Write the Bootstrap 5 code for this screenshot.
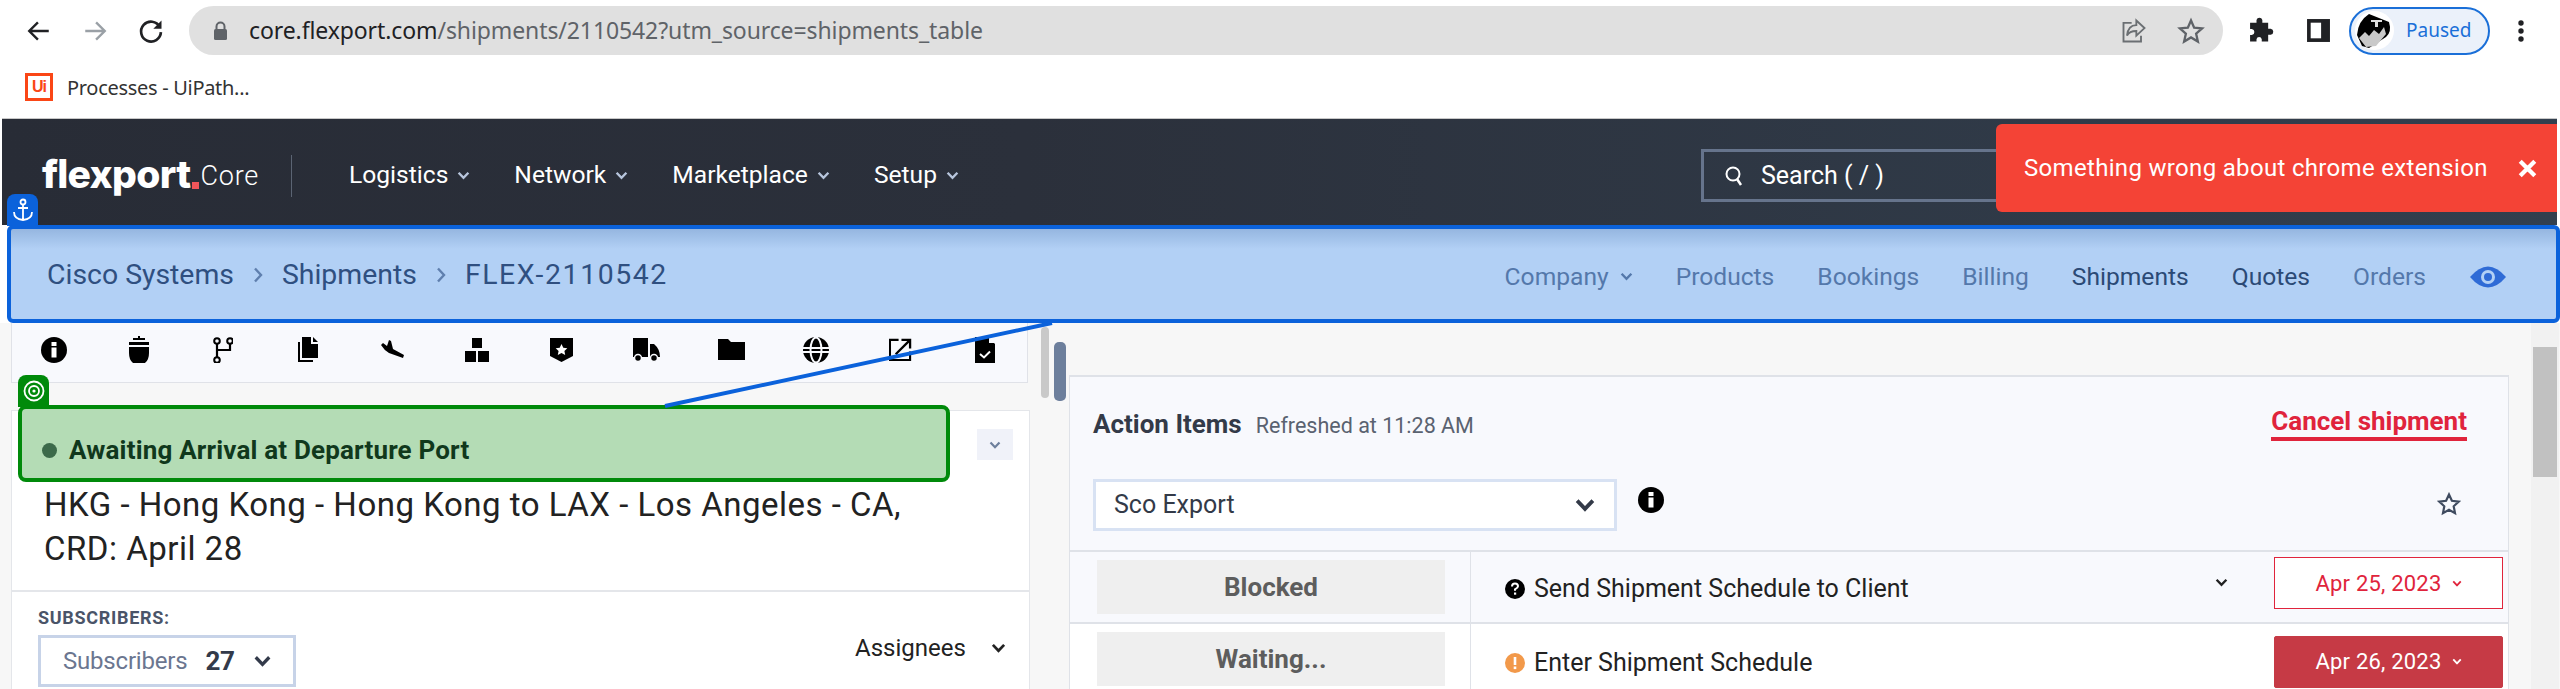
<!DOCTYPE html>
<html lang="en">
<head>
<meta charset="UTF-8">
<title>FLEX-2110542</title>
<link href="https://cdn.jsdelivr.net/npm/bootstrap@5.3.0/dist/css/bootstrap.min.css" rel="stylesheet">
<style>
html,body{height:689px;overflow:hidden;background:#fff;}
body{font-family:Roboto,"Liberation Sans",sans-serif;color:#222;position:relative;}
svg{display:block;flex:none;}

/* browser chrome */
.tool-row{height:60px;padding:6px 0 5px 0;}
.tool-btn{width:56px;display:flex;justify-content:center;}
.tool-back{margin-left:11px;}
.url-bar{width:2034px;height:49px;margin-left:10px;background:#e0e0e0;border-radius:25px;padding:0 18px 0 24px;font-family:"Noto Sans",sans-serif;font-size:23px;letter-spacing:-.1px;color:#5f6368;}
.url-bar b{font-weight:400;color:#202124;}
.url-lock{margin-right:21px;}
.url-icons{margin-left:auto;gap:29px;}
.tool-puzzle{margin-left:23px;}
.tool-side{margin-left:32px;}
.profile-pill{margin-left:18px;width:141px;height:48px;border:2px solid #1a6fd8;border-radius:24px;background:#ebf1fa;color:#1a6fd8;font-family:"Noto Sans",sans-serif;font-size:19px;padding-left:4px;gap:12px;}
.tool-dots{margin-left:27px;}
.mark-row{height:58px;padding:13px 0 0 25px;font-family:"Noto Sans",sans-serif;font-size:20px;letter-spacing:-.3px;color:#333;gap:14px;}
.ui-logo{width:28px;height:28px;border:3px solid #fa4616;color:#fa4616;font-size:16px;line-height:22px;text-align:center;font-family:"Liberation Sans",sans-serif;font-weight:700;letter-spacing:-1px;}

/* app header */
.top-nav{height:107px;margin:0 3px 0 2px;padding:0;border-top:1px solid #c8c8c8;background:linear-gradient(90deg,#282c36,#2b303b 40%,#323f4e);color:#fff;position:relative;display:flex;align-items:center;justify-content:flex-start;}
.brand-box{padding:0 0 0 40px;width:290px;height:42px;border-right:1px solid #5b6473;margin-top:7px;align-items:center;}
.brand-name{font-family:Inter,sans-serif;font-weight:800;font-size:39px;letter-spacing:-.7px;line-height:42px;color:#fff;margin-top:-3px;}
.brand-dot{display:inline-block;width:7px;height:7px;background:#f0555a;margin:0 1px 0 2px;}
.brand-core{font-size:27px;font-weight:300;margin-top:2px;letter-spacing:.8px;}
.top-links{margin-left:57px;margin-top:7px;gap:0;}
.top-links .nav-link{padding:0;color:#fff;font-size:24.6px;display:flex;align-items:center;gap:9px;margin-right:44px;}
.search-box{position:absolute;left:1699px;top:30px;width:400px;height:53px;border:3px solid #66748c;font-size:25px;padding-left:20px;gap:17px;color:#fff;}
.err-toast{position:absolute;left:1994px;top:5px;width:561px;height:88px;background:#f44336;border-radius:6px 0 0 6px;color:#fff;font-size:24px;letter-spacing:.32px;padding:0 20px 0 28px;justify-content:space-between;}
.anchor-tab{position:absolute;left:5px;top:75px;width:31px;height:32px;background:#0b62db;border-radius:8px 8px 0 0;display:flex;align-items:center;justify-content:center;}

/* highlighted sub header */
.sub-bar{height:98px;margin-left:7px;background:linear-gradient(180deg,#95b6e0,#b2d0f5 20px);border:4px solid #0b62db;border-radius:6px;padding:0 49px 0 36px;position:relative;z-index:2;}
.sub-bar .breadcrumb{margin:3px 0 0 0;font-size:28.4px;align-items:center;}
.crumb-item{color:#2f4f80;}
.crumb-flex{letter-spacing:1.6px;}
.crumb-sep{margin:0 18px;}
.sub-links{gap:43px;margin-top:6px;}
.sub-links .nav-link{padding:0;font-size:24.6px;color:#5478ab;display:flex;align-items:center;gap:11px;}
.sub-links .nav-link.on{color:#2b4a76;}

/* page body */
.main-area{height:366px;background:#f7f7f7;overflow:hidden;}
.left-col{width:1019px;margin-left:11px;flex:none;}
.icon-strip{height:60px;width:1017px;background:#f8f9fd;border:1px solid #e0e2e8;border-top:0;padding:0 0 6px 0;display:grid;grid-template-columns:repeat(12,84.6px);align-items:center;justify-items:center;}
.status-card{width:1019px;margin-top:27px;background:#fff;border:1px solid #e4e6ea;height:300px;position:relative;}
.status-row{height:72px;margin-top:-4px;}
.goal-tab{position:absolute;left:6px;top:-36px;width:31px;height:32px;background:#008a0a;border-radius:8px 8px 0 0;display:flex;align-items:center;justify-content:center;}
.status-box{margin-left:6px;width:932px;height:77px;background:#b4dcb5;border:4px solid #008a0a;border-radius:8px;padding:14px 0 0 20px;font-size:26px;letter-spacing:.18px;font-weight:700;color:#10381c;gap:12px;}
.status-dot{width:15px;height:15px;border-radius:50%;background:#3c6a4a;}
.status-btn{width:36px;height:31px;background:#f0f2f9;margin-left:27px;margin-top:3px;padding:0;border:0;border-radius:0;display:flex;align-items:center;justify-content:center;}
.ship-title{font-size:33px;letter-spacing:.5px;line-height:44px;font-weight:400;color:#222;margin:0;padding:4px 20px 0 32px;height:113px;border-bottom:2px solid #e4e6ea;}
.sub-label{font-size:18px;letter-spacing:.7px;font-weight:700;color:#4a5468;line-height:20px;margin:16px 0 7px 26px;}
.subs-btn{margin-left:26px;width:258px;height:52px;border:3px solid #c7d3e8;border-radius:0;background:#fff;color:#6b7690;font-size:24px;letter-spacing:-.2px;padding:0 0 0 22px;display:flex;align-items:center;gap:18px;}
.subs-btn b{color:#333a4a;font-size:26px;}
.assign-box{font-size:24px;color:#222;gap:25px;margin:-57px 0 0 843px;}
.gutter{width:39px;flex:none;padding:4px 0 0 11px;gap:5px;}
.bar-light{width:8px;height:71px;background:#c9c9c9;border-radius:4px;}
.bar-dark{width:12px;height:59px;margin-top:15px;background:#6d7f9c;border-radius:5px;}
.action-panel{width:1440px;margin-top:52px;height:320px;background:#f8f9fd;border:1px solid #dfe2e8;border-top-width:2px;flex:none;}
.action-head{height:95px;padding:28px 41px 0 23px;}
.action-title{font-size:26px;font-weight:700;color:#333a48;}
.action-time{font-size:21.5px;color:#5a6270;margin-left:14px;}
.cancel-link{font-size:26px;font-weight:700;color:#e0243c;border-bottom:4px solid #e0243c;line-height:31px;text-decoration:none;margin-top:1px;}
.filter-row{height:80px;padding:7px 47px 0 23px;border-bottom:2px solid #dfe2e8;align-items:flex-start!important;}
.filter-pick{width:524px;height:52px;border:3px solid #d8e2f3;background:#fff;font-size:25px;color:#333a48;padding:0 18px 0 18px;}
.filter-info{margin:8px 0 0 21px;}
.filter-star{margin:13px 0 0 auto;}
.item-row{height:72px;border-bottom:2px solid #dfe2e8;}
.item-row.white{background:#fff;height:76px;border:0;}
.state-cell{width:401px;height:100%;border-right:1px solid #dfe2e8;padding:8px 25px 0 27px;flex:none;}
.state-box{background:#efefef;height:54px;font-size:26px;font-weight:700;color:#5d5d5d;}
.item-name{font-size:25px;color:#222;padding-left:34px;gap:9px;margin-top:2px;}
.item-row:not(.white) .item-name{margin-top:4px;}
.item-chev{margin:-10px 46px 0 auto;}
.date-btn{width:229px;height:52px;margin-right:5px;padding:0;border-radius:0;font-size:22px;letter-spacing:.2px;display:flex;align-items:center;justify-content:center;gap:10px;border:1px solid #e0243c;color:#e0243c;background:#fff;margin-top:-8px;}
.date-btn.due{background:#c63a45;border-color:#c63a45;color:#fff;border-radius:2px;margin-top:-1px;}
.page-scroll{width:28px;margin-left:22px;background:#f1f1f1;flex:none;padding:24px 2px 0 2px;}
.page-thumb{height:130px;background:#c1c1c1;}
.link-line{position:absolute;left:0;top:0;z-index:3;pointer-events:none;}
</style>
</head>
<body>

<svg width="0" height="0" class="position-absolute">
  <symbol id="chev" viewBox="0 0 12 8"><path d="M1.500 1.500 6 6.200l4.500-4.700" fill="none" stroke="currentColor" stroke-width="2.200"/></symbol>
  <symbol id="sep" viewBox="0 0 10 16"><path d="M2 1.500 8 8l-6 6.500" fill="none" stroke="currentColor" stroke-width="2.400"/></symbol>
</svg>

<!-- browser toolbar -->
<div class="tool-row d-flex align-items-center">
  <div class="tool-btn tool-back"><svg width="26" height="26" viewBox="0 0 24 24"><path d="M21 12H4M11 4l-8 8 8 8" fill="none" stroke="#202124" stroke-width="2.200"/></svg></div>
  <div class="tool-btn"><svg width="26" height="26" viewBox="0 0 24 24"><path d="M3 12h17M13 4l8 8-8 8" fill="none" stroke="#9aa0a6" stroke-width="2.200"/></svg></div>
  <div class="tool-btn"><svg width="28" height="28" viewBox="0 0 24 24"><path d="M19.500 8.500A8.500 8.500 0 1 0 20.500 13" fill="none" stroke="#202124" stroke-width="2.300"/><path d="M21 3v7h-7z" fill="#202124"/></svg></div>
  <div class="url-bar d-flex align-items-center">
    <svg class="url-lock" width="15" height="20" viewBox="0 0 15 20"><path d="M3.500 8V5.500a4 4 0 0 1 8 0V8" fill="none" stroke="#5f6368" stroke-width="2"/><rect x="1" y="8" width="13" height="11" rx="1.500" fill="#5f6368"/></svg>
    <span><b>core.flexport.com</b>/shipments/2110542?utm_source=shipments_table</span>
    <div class="url-icons d-flex align-items-center">
      <svg width="28" height="28" viewBox="0 0 24 24"><path d="M10 5H3v16h15v-5" fill="none" stroke="#6b6f73" stroke-width="1.600"/><path d="M14 3l7 6.500-7 6.500v-4c-4 0-6.500 1-8 4 .5-5 3-9 8-9z" fill="none" stroke="#6b6f73" stroke-width="1.600"/></svg>
      <svg width="28" height="28" viewBox="0 0 24 24"><path d="M12 3l2.700 6.200 6.800.6-5.100 4.500 1.500 6.700L12 17.500 6.100 21l1.500-6.700L2.500 9.800l6.800-.6z" fill="none" stroke="#5f6368" stroke-width="2"/></svg>
    </div>
  </div>
  <svg class="tool-puzzle" width="28" height="28" viewBox="0 0 24 24"><path d="M9 2.500a2.600 2.600 0 0 1 5 0V5h5v5h2.200a2.700 2.700 0 0 1 0 5.300H19V21h-5.500v-2a2.300 2.300 0 0 0-4.500 0v2H3.500v-5.500H5a2.700 2.700 0 0 0 0-5.300H3.500V5H9z" fill="#202124"/></svg>
  <svg class="tool-side" width="25" height="25" viewBox="0 0 24 24"><path d="M1 1h22v22H1z" fill="#202124"/><path d="M4.500 4.500h10v15h-10z" fill="#fff"/></svg>
  <div class="profile-pill d-flex align-items-center">
    <svg width="39" height="39" viewBox="0 0 39 39"><circle cx="19.500" cy="19.500" r="19.500" fill="#fff"/><path d="M14 3 34 11q3 10-3 15L14 37 7 35 2 24Q3 10 14 3z" fill="#000"/><path d="M4 27l6-6 4 4 5-6 5 4 5-7 2 7-10 12-10 1z" fill="#c9c9c9"/><path d="M16 9h11v2h-4v5h-3v-5h-4z" fill="#ddd"/></svg>
    <span>Paused</span>
  </div>
  <svg class="tool-dots" width="8" height="24" viewBox="0 0 8 24"><circle cx="4" cy="4" r="2.700" fill="#202124"/><circle cx="4" cy="12" r="2.700" fill="#202124"/><circle cx="4" cy="20" r="2.700" fill="#202124"/></svg>
</div>
<div class="mark-row d-flex align-items-start">
  <div class="ui-logo">Ui</div>
  <span>Processes - UiPath...</span>
</div>

<!-- app header -->
<nav class="top-nav">
  <div class="brand-box d-flex">
    <span class="brand-name">flexport</span><span class="brand-dot align-self-end mb-2"></span><span class="brand-core">Core</span>
  </div>
  <ul class="nav top-links">
    <li class="nav-item"><a class="nav-link" href="#">Logistics <svg width="13" height="9"><use href="#chev" style="color:#b7c5dc"/></svg></a></li>
    <li class="nav-item"><a class="nav-link" href="#">Network <svg width="13" height="9"><use href="#chev" style="color:#b7c5dc"/></svg></a></li>
    <li class="nav-item"><a class="nav-link" href="#">Marketplace <svg width="13" height="9"><use href="#chev" style="color:#b7c5dc"/></svg></a></li>
    <li class="nav-item"><a class="nav-link" href="#">Setup <svg width="13" height="9"><use href="#chev" style="color:#b7c5dc"/></svg></a></li>
  </ul>
  <div class="search-box d-flex align-items-center">
    <svg width="20" height="22" viewBox="0 0 20 22"><circle cx="9" cy="9" r="6.500" fill="none" stroke="#fff" stroke-width="2"/><path d="M13 14l4 6" stroke="#fff" stroke-width="2.500"/></svg>
    <span>Search ( / )</span>
  </div>
  <div class="err-toast d-flex align-items-center">
    <span>Something wrong about chrome extension</span>
    <svg width="19" height="19" viewBox="0 0 17 17"><path d="M2 2l13 13M15 2 2 15" stroke="#fff" stroke-width="3.800"/></svg>
  </div>
  <div class="anchor-tab">
    <svg width="22" height="24" viewBox="0 0 22 24"><circle cx="11" cy="4" r="2.500" fill="none" stroke="#fff" stroke-width="1.800"/><path d="M11 6.500V22M6 10h10M2 14c0 5 4 7.500 9 8 5-.5 9-3 9-8" fill="none" stroke="#fff" stroke-width="1.800"/></svg>
  </div>
</nav>

<!-- highlighted sub header -->
<div class="sub-bar d-flex align-items-center justify-content-between">
  <div class="breadcrumb d-flex">
    <span class="crumb-item">Cisco Systems</span>
    <svg class="crumb-sep" width="12" height="16"><use href="#sep" style="color:#5f7fae"/></svg>
    <span class="crumb-item">Shipments</span>
    <svg class="crumb-sep" width="12" height="16"><use href="#sep" style="color:#5f7fae"/></svg>
    <span class="crumb-item crumb-flex">FLEX-2110542</span>
  </div>
  <ul class="nav sub-links align-items-center">
    <li class="nav-item"><a class="nav-link" href="#">Company <svg width="13" height="9"><use href="#chev"/></svg></a></li>
    <li class="nav-item"><a class="nav-link" href="#">Products</a></li>
    <li class="nav-item"><a class="nav-link" href="#">Bookings</a></li>
    <li class="nav-item"><a class="nav-link" href="#">Billing</a></li>
    <li class="nav-item"><a class="nav-link on" href="#">Shipments</a></li>
    <li class="nav-item"><a class="nav-link on" href="#">Quotes</a></li>
    <li class="nav-item"><a class="nav-link" href="#">Orders</a></li>
    <li class="nav-item"><svg width="38" height="24" viewBox="0 0 38 24"><path d="M1 12Q19-9 37 12 19 33 1 12z" fill="#2f6bd6"/><circle cx="19" cy="12" r="7" fill="#b2d0f5"/><circle cx="19" cy="12" r="4" fill="#2f6bd6"/></svg></li>
  </ul>
</div>

<!-- page body -->
<div class="main-area d-flex">
  <div class="left-col">
    <div class="icon-strip">
      <svg width="26" height="26" viewBox="0 0 26 26"><circle cx="13" cy="13" r="13"/><rect x="10.500" y="10.500" width="5" height="10" fill="#fff"/><rect x="10.500" y="5" width="5" height="4" fill="#fff"/></svg>
      <svg width="20" height="27" viewBox="0 0 20 27"><path d="M9 0h2v2h5v2H4V2h5zM0 6h20v3H0zM0 11h20v6q0 7-4 10H4Q0 24 0 17z"/></svg>
      <svg width="20" height="26" viewBox="0 0 20 26"><circle cx="4" cy="4" r="2.800" fill="none" stroke="#000" stroke-width="2"/><circle cx="17" cy="4" r="2.800" fill="none" stroke="#000" stroke-width="2"/><circle cx="4" cy="23" r="2.800" fill="none" stroke="#000" stroke-width="2"/><path d="M4 7v13M4 13h13V7" fill="none" stroke="#000" stroke-width="2.200"/></svg>
      <svg width="20" height="25" viewBox="0 0 20 25"><path d="M4 0h9v7h7v14H4z"/><path d="M15 0l5 5h-5z"/><path d="M1 5v19h14" fill="none" stroke="#000" stroke-width="2"/></svg>
      <svg width="24" height="20" viewBox="0 0 24 20"><path d="M0 5 2 3 6 6 8 0l2 1 2 8 11 6-1 3-14-5q-5-3-8-8z"/></svg>
      <svg width="24" height="24" viewBox="0 0 24 24"><path d="M7 0h10v10H7zM0 13h11v11H0zM13 13h11v11H13z"/></svg>
      <svg width="23" height="24" viewBox="0 0 23 24"><path d="M0 0h23v18l-11.500 6L0 18z"/><path d="M11.500 6l1.800 3.700 4 .5-2.900 2.800.8 4-3.700-2-3.700 2 .8-4-2.900-2.800 4-.5z" fill="#fff"/></svg>
      <svg width="27" height="24" viewBox="0 0 27 24"><path d="M0 0h15v19H0zM17 6h4q6 5 6 13H17z"/><circle cx="5" cy="20" r="3.500" stroke="#f8f9fd" stroke-width="1.500"/><circle cx="21" cy="20" r="3.500" stroke="#f8f9fd" stroke-width="1.500"/></svg>
      <svg width="27" height="21" viewBox="0 0 27 21"><path d="M0 0h10l3 3h14v18H0z"/></svg>
      <svg width="26" height="26" viewBox="0 0 26 26"><circle cx="13" cy="13" r="13"/><path d="M0 11h26M0 15h26" stroke="#f8f9fd" stroke-width="2"/><ellipse cx="13" cy="13" rx="5.500" ry="12.500" fill="none" stroke="#f8f9fd" stroke-width="2"/></svg>
      <svg width="23" height="23" viewBox="0 0 24 24"><path d="M10 2H1v21h21v-9" fill="none" stroke="#000" stroke-width="2.200"/><path d="M7 17 21 3M13 2h9v9" fill="none" stroke="#000" stroke-width="2.400"/></svg>
      <svg width="20" height="26" viewBox="0 0 20 26"><path d="M0 0h13l7 7v19H0z"/><path d="M14 0l6 6h-6z" fill="#f8f9fd"/><path d="M5 17l4 3.500 6-6" fill="none" stroke="#fff" stroke-width="2"/></svg>
    </div>

    <div class="status-card">
      <div class="goal-tab">
        <svg width="22" height="22" viewBox="0 0 22 22"><circle cx="11" cy="11" r="9.500" fill="none" stroke="#fff" stroke-width="1.800"/><circle cx="11" cy="11" r="5" fill="none" stroke="#fff" stroke-width="1.800"/><circle cx="11" cy="11" r="1.600" fill="#fff"/></svg>
      </div>
      <div class="status-row d-flex align-items-center">
        <div class="status-box d-flex align-items-center"><span class="status-dot"></span>Awaiting Arrival at Departure Port</div>
        <button class="btn status-btn"><svg width="12" height="8" style="color:#6d7f9c"><use href="#chev"/></svg></button>
      </div>
      <h1 class="ship-title">HKG - Hong Kong - Hong Kong to LAX - Los Angeles - CA,<br>CRD: April 28</h1>
      <div class="sub-label">SUBSCRIBERS:</div>
      <button class="btn subs-btn">Subscribers <b>27</b><svg width="19" height="12" style="color:#333a4a"><use href="#chev"/></svg></button>
      <div class="assign-box d-flex align-items-center">Assignees <svg width="15" height="10"><use href="#chev"/></svg></div>
    </div>
  </div>

  <div class="gutter d-flex">
    <div class="bar-light"></div>
    <div class="bar-dark"></div>
  </div>

  <div class="action-panel">
    <div class="action-head d-flex justify-content-between align-items-start">
      <div class="d-flex align-items-baseline"><span class="action-title">Action Items</span><span class="action-time">Refreshed at 11:28 AM</span></div>
      <a class="cancel-link" href="#">Cancel shipment</a>
    </div>
    <div class="filter-row d-flex">
      <div class="filter-pick d-flex align-items-center justify-content-between">Sco Export <svg width="22" height="14" viewBox="0 0 12 8"><use href="#chev"/></svg></div>
      <svg class="filter-info" width="26" height="26" viewBox="0 0 26 26"><circle cx="13" cy="13" r="13"/><rect x="10.500" y="10.500" width="5" height="10" fill="#fff"/><rect x="10.500" y="5" width="5" height="4" fill="#fff"/></svg>
      <svg class="filter-star" width="24" height="24" viewBox="0 0 24 24"><path d="M12 2.500l2.900 6.300 6.800.8-5 4.700 1.300 6.800-6-3.400-6 3.400 1.300-6.800-5-4.700 6.800-.8z" fill="none" stroke="#3f4b5f" stroke-width="2.200"/></svg>
    </div>
    <div class="item-row d-flex align-items-center">
      <div class="state-cell"><div class="state-box d-flex align-items-center justify-content-center">Blocked</div></div>
      <div class="item-name d-flex align-items-center">
        <svg width="20" height="20" viewBox="0 0 20 20"><circle cx="10" cy="10" r="10"/><path d="M7 7.500Q7 4.500 10 4.500t3 2.800q0 1.500-3 3v1.500" fill="none" stroke="#fff" stroke-width="2"/><rect x="9" y="13.500" width="2.200" height="2.200" fill="#fff"/></svg>
        Send Shipment Schedule to Client
      </div>
      <svg class="item-chev" width="13" height="9"><use href="#chev"/></svg>
      <button class="btn date-btn">Apr 25, 2023 <svg width="10" height="7" viewBox="0 0 12 8"><use href="#chev"/></svg></button>
    </div>
    <div class="item-row white d-flex align-items-center">
      <div class="state-cell"><div class="state-box d-flex align-items-center justify-content-center">Waiting...</div></div>
      <div class="item-name d-flex align-items-center">
        <svg width="20" height="20" viewBox="0 0 20 20"><circle cx="10" cy="10" r="10" fill="#f2994a"/><rect x="8.700" y="4" width="2.600" height="8" fill="#fff"/><rect x="8.700" y="13.500" width="2.600" height="2.600" fill="#fff"/></svg>
        Enter Shipment Schedule
      </div>
      <button class="btn date-btn due ms-auto">Apr 26, 2023 <svg width="10" height="7" viewBox="0 0 12 8"><use href="#chev"/></svg></button>
    </div>
  </div>

  <div class="page-scroll"><div class="page-thumb"></div></div>
</div>

<!-- connector between the two highlights -->
<svg class="link-line" width="2560" height="689"><path d="M1052 323 665 406" stroke="#0b62db" stroke-width="4"/></svg>

<script src="https://cdn.jsdelivr.net/npm/bootstrap@5.3.0/dist/js/bootstrap.bundle.min.js"></script>
</body>
</html>
